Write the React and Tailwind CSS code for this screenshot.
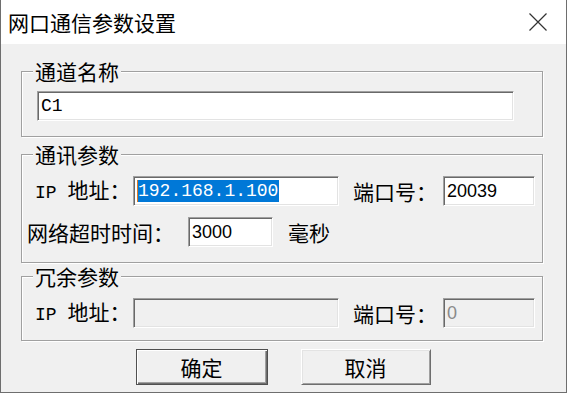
import React from 'react';

// Win32-style dialog: 网口通信参数设置
const cjk = "font-['Noto_Sans_CJK_SC','Noto_Sans',sans-serif]";
const sunken =
  'border border-t-[#a0a0a0] border-l-[#a0a0a0] border-r-white border-b-white shadow-[inset_1px_1px_0_#696969,inset_-1px_-1px_0_#e3e3e3]';

const Box = ({ w, disabled, children, className = '' }) => (
  <div
    className={`h-[30px] ${w} ${sunken} ${disabled ? 'bg-[#f0f0f0]' : 'bg-white'} flex items-center pl-[3px] pr-[2px] overflow-hidden ${className}`}
  >
    {children}
  </div>
);

const Group = ({ title, children, className = '' }) => (
  <fieldset className={`border border-[#a0a0a0] shadow-[inset_1px_1px_0_#fff,1px_1px_0_#fff] ${className}`}>
    <legend className={`ml-[11px] px-[2px] bg-[#f0f0f0] text-[21px] leading-[24px] text-black ${cjk}`}>{title}</legend>
    {children}
  </fieldset>
);

const IpLabel = () => (
  <span className={`w-[98px] shrink-0 text-[21px] leading-[24px] text-black ${cjk}`}>
    <span className="font-['Liberation_Mono',monospace] text-[18px]">IP </span>地址：
  </span>
);

const PortLabel = () => (
  <span className={`ml-[14px] w-[90px] shrink-0 text-[21px] leading-[24px] text-black ${cjk}`}>端口号：</span>
);

export default function App() {
  return (
    <div className="w-[567px] h-[394px] bg-white">
      <div className="w-[567px] h-[393px] flex flex-col border-x border-b border-[#6e6e6e]">
        {/* title bar */}
        <div className="h-[44px] shrink-0 bg-white flex items-center justify-between pl-[7px] pr-[19px]">
          <span className={`text-[21px] leading-[26px] text-black ${cjk}`}>网口通信参数设置</span>
          <svg width="18" height="18" viewBox="0 0 18 18" className="text-[#333]">
            <path d="M0.5 0.5 L17.5 17.5 M17.5 0.5 L0.5 17.5" stroke="currentColor" strokeWidth="1.2" fill="none" />
          </svg>
        </div>

        {/* body */}
        <div className="flex-1 bg-[#f0f0f0] pl-[20px] pr-[23px] pt-[15px]">
          <Group title="通道名称">
            <div className="pt-[8px] pl-[15px] pr-[27px] pb-[15px]">
              <Box w="w-[477px]">
                <span className="font-['Liberation_Mono',monospace] text-[18px] leading-[22px] text-black">C1</span>
              </Box>
            </div>
          </Group>

          <Group title="通讯参数" className="mt-[5px]">
            <div className="pt-[10px] pb-[15px]">
              <div className="flex items-center pl-[13px]">
                <IpLabel />
                <Box w="w-[206px]" className="shrink-0">
                  <span className="bg-[#0078d7] text-white border-l border-[#e07b22] font-['Liberation_Mono',monospace] text-[18px] leading-[22px] pr-[1px]">
                    192.168.1.100
                  </span>
                </Box>
                <PortLabel />
                <Box w="w-[92px]" className="ml-[0px] shrink-0">
                  <span className="font-['Liberation_Sans',Arial,sans-serif] text-[18px] leading-[22px] text-black">20039</span>
                </Box>
              </div>
              <div className="flex items-center pl-[5px] mt-[11px]">
                <span className={`w-[147px] shrink-0 text-[21px] leading-[24px] text-black ${cjk}`}>网络超时时间：</span>
                <Box w="w-[85px]" className="ml-[14px] shrink-0">
                  <span className="font-['Liberation_Sans',Arial,sans-serif] text-[18px] leading-[22px] text-black">3000</span>
                </Box>
                <span className={`ml-[15px] text-[21px] leading-[24px] text-black ${cjk}`}>毫秒</span>
              </div>
            </div>
          </Group>

          <Group title="冗余参数" className="mt-[1px]">
            <div className="pt-[10px] pb-[12px]">
              <div className="flex items-center pl-[13px]">
                <IpLabel />
                <Box w="w-[206px]" disabled className="shrink-0" />
                <PortLabel />
                <Box w="w-[92px]" disabled className="shrink-0">
                  <span className="font-['Liberation_Sans',Arial,sans-serif] text-[18px] leading-[22px] text-[#8a8a8a]">0</span>
                </Box>
              </div>
            </div>
          </Group>

          <div className="flex justify-center gap-[33px] mt-[8px] pl-[2px]">
            <button className={`w-[132px] h-[36px] bg-[#f0f0f0] border border-[#505050] shadow-[inset_1px_1px_0_#fff,inset_-1px_-1px_0_#6e6e6e,inset_-2px_-2px_0_#a0a0a0] text-[21px] leading-[24px] text-black ${cjk}`}>
              确定
            </button>
            <button className={`w-[130px] h-[36px] bg-[#f0f0f0] border border-t-white border-l-white border-r-[#6e6e6e] border-b-[#6e6e6e] shadow-[inset_1px_1px_0_#e3e3e3,inset_-1px_-1px_0_#a0a0a0] text-[21px] leading-[24px] text-black ${cjk}`}>
              取消
            </button>
          </div>
        </div>
      </div>
    </div>
  );
}
